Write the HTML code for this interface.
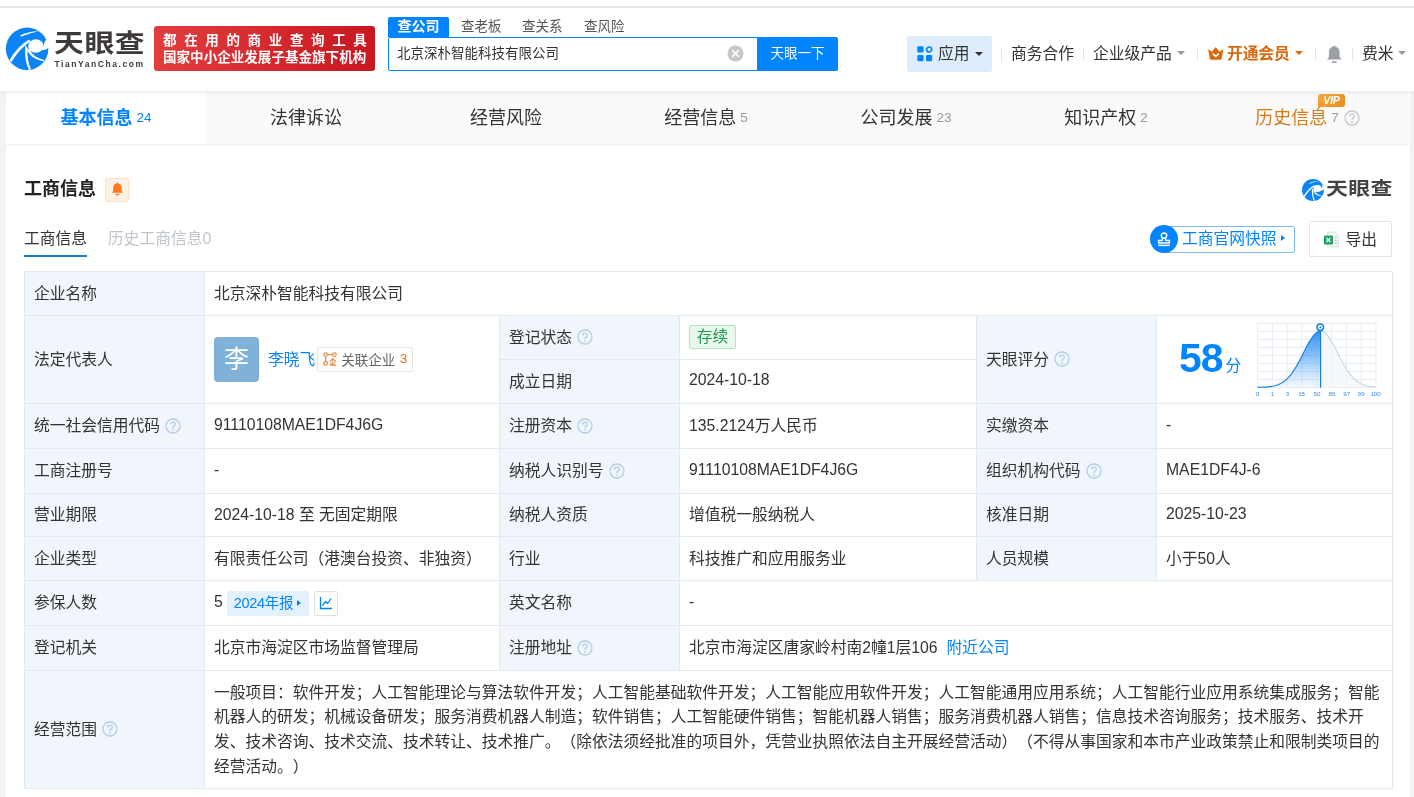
<!DOCTYPE html>
<html lang="zh-CN">
<head>
<meta charset="utf-8">
<title>北京深朴智能科技有限公司 - 天眼查</title>
<style>
*{box-sizing:border-box;margin:0;padding:0}
html,body{width:1414px;height:797px;overflow:hidden}
body{background:#f3f3f3;font-family:"Liberation Sans","Noto Sans CJK SC",sans-serif;font-size:15.75px;color:#333;position:relative;text-spacing-trim:space-all}
.abs{position:absolute;white-space:nowrap}
#wrap{position:absolute;left:0;top:0;width:1414px;height:797px;will-change:transform;opacity:.999}
a{color:#0084ff;text-decoration:none}
/* header */
#hdr{position:absolute;left:0;top:0;width:1414px;height:91px;background:#fff;box-shadow:0 2px 6px rgba(0,0,0,.07);z-index:5}
#topline{position:absolute;left:0;top:6px;width:1414px;height:2px;background:#e4e4e4}

.stab{top:17px;font-size:13.5px;line-height:19px;color:#555}
.nav{top:43px;font-size:15.75px;line-height:22px;color:#333}
.car{top:50.5px;width:0;height:0;border:4px solid transparent;border-top-width:4px;border-bottom-width:0}
.sep{top:47px;width:1px;height:14px;background:#e6e6e6}
/* card */
#card{position:absolute;left:6px;top:91px;width:1404px;height:720px;background:#fff}
#tabs{position:absolute;left:0;top:0;width:1403px;height:54px;background:#fafafa;border-bottom:1px solid #f0f0f0}
.tab{position:absolute;top:0;height:53px;width:200px;text-align:center;line-height:54.5px;font-size:18px;color:#333;white-space:nowrap}
.tab .n{font-size:13.5px;color:#999;margin-left:4px;position:relative;top:-2px}
.tab.on{background:#fff;color:#0084ff;font-weight:bold}
.tab.on .n{color:#0084ff;font-weight:normal}
/* table */
.c{position:absolute;border-right:1px solid #e1eaf3;border-bottom:1px solid #e1eaf3;padding-left:9px;padding-bottom:3px;display:flex;align-items:center;white-space:nowrap;background:#fff;color:#333}
.l{background:#f0f6fc}
.q{display:inline-block;width:16px;height:16px;margin-left:5px;flex:none;position:relative;top:1px}

.ava{position:relative;top:1px;width:45px;height:45px;border-radius:4px;background:#7fb1d9;color:#fff;font-size:25px;line-height:45px;text-align:center;flex:none}
.rel{position:relative;top:1.5px;margin-left:2px;height:25px;border:1px solid #e6e6e6;border-radius:2px;padding:0 5px 0 5px;display:flex;align-items:center;font-size:13.5px;color:#666;padding-bottom:2px}
.ok{position:relative;top:0.8px;height:24px;line-height:21px;padding:0 6.7px;border:1px solid #b3e2c3;background:#e9f8ee;color:#1f9b4c;border-radius:2px;font-size:15.75px}
.score{font-size:41px;font-weight:bold;color:#0084ff;margin-left:13px;letter-spacing:-1px}
.fen{color:#0084ff;margin-left:3px;margin-top:12px}
.yr{position:relative;top:1.5px;margin-left:4px;height:25px;line-height:25px;background:#e3f1ff;color:#0084ff;border-radius:2px;padding:0 8px 0 7px;font-size:14.5px;display:flex;align-items:center;letter-spacing:-0.3px}
.yr i{display:block;width:0;height:0;border:3.5px solid transparent;border-left:4.5px solid #0084ff;border-right:0;margin-left:4px}
.ch{position:relative;top:1.5px;margin-left:5px;width:24px;height:25px;border:1px solid #e0e0e0;border-radius:2px;display:flex;align-items:center;justify-content:center}
.scope{white-space:normal;line-height:24.75px;width:1172px;letter-spacing:0;position:relative;top:2px}
</style>
</head>
<body>
<div id="wrap">
<div id="hdr">
  <div id="topline"></div>
  <svg class="abs" style="left:0;top:20px" width="60" height="60" viewBox="0 0 797 797">
    <circle cx="360" cy="383" r="282" fill="#0d84f5"/>
    <ellipse cx="476" cy="345" rx="102" ry="90" fill="#fff"/>
    <path d="M624,246 Q592,285 578,338 L560,402 Q612,400 650,366 L700,300 Z" fill="#fff"/>
    <path d="M126,534 Q225,352 388,258 L402,285 Q258,378 150,562 Z" fill="#fff"/>
    <path d="M262,210 Q380,146 520,150 Q385,172 284,220 Z" fill="#fff"/>
    <path d="M356,380 Q395,520 592,552 L584,530 Q440,496 396,395 Z" fill="#fff"/>
    <path d="M336,330 Q318,540 386,664 L412,656 Q352,530 368,380 Z" fill="#fff"/>
  </svg>
  <div class="abs" id="lgname" style="left:54px;top:22.5px;font-size:25.5px;font-weight:700;letter-spacing:0.5px;color:#3f3a3a;line-height:40px;transform-origin:0 50%;transform:scaleX(1.17)">天眼查</div>
  <div class="abs" id="lgurl" style="left:54.5px;top:57px;font-size:8.5px;font-weight:bold;letter-spacing:1.55px;color:#3f3a3a;line-height:14px">TianYanCha.com</div>
  <div class="abs" id="banner" style="left:154px;top:26px;width:221px;height:45px;border-radius:3px;background:linear-gradient(90deg,#e23d3f,#c9171f);color:#fff;font-weight:bold;text-align:center">
    <div class="abs" style="left:9px;top:6px;font-size:13.5px;line-height:18px;letter-spacing:7.65px">都在用的商业查询工具</div>
    <div class="abs" style="left:9px;top:23px;font-size:13.5px;line-height:18px;letter-spacing:0.05px">国家中小企业发展子基金旗下机构</div>
  </div>
  <div class="abs" style="left:388px;top:17px;width:61px;height:20px;background:#0084ff;color:#fff;font-weight:bold;font-size:14px;line-height:19px;text-align:center;border-radius:2px 2px 0 0">查公司</div>
  <div class="abs stab" style="left:461px">查老板</div>
  <div class="abs stab" style="left:522px">查关系</div>
  <div class="abs stab" style="left:584px">查风险</div>
  <div class="abs" style="left:388px;top:37px;width:370px;height:34px;border:1px solid #0084ff;border-radius:2px 0 0 2px;background:#fff"></div>
  <div class="abs" style="left:397px;top:44px;font-size:13.5px;line-height:20px;color:#333">北京深朴智能科技有限公司</div>
  <svg class="abs" style="left:727px;top:45px" width="17" height="17" viewBox="0 0 17 17"><circle cx="8.5" cy="8.5" r="8" fill="#c6c6cc"/><path d="M5.6,5.6 L11.4,11.4 M11.4,5.6 L5.6,11.4" stroke="#fff" stroke-width="1.6" stroke-linecap="round"/></svg>
  <div class="abs" style="left:757px;top:37px;width:81px;height:34px;background:#0084ff;color:#fff;font-size:13.5px;line-height:33px;text-align:center;border-radius:0 2px 2px 0">天眼一下</div>

  <div class="abs" style="left:907px;top:36px;width:85px;height:36px;background:#deedfd;border-radius:3px"></div>
  <svg class="abs" style="left:917px;top:46px" width="16" height="16" viewBox="0 0 16 16"><rect x="0.3" y="0.3" width="6.2" height="6.2" rx="1.3" fill="#0084ff"/><rect x="0.3" y="9" width="6.2" height="6.2" rx="1.3" fill="#0084ff"/><rect x="9" y="9" width="6.2" height="6.2" rx="1.3" fill="#0084ff"/><circle cx="12.1" cy="3.5" r="2.5" fill="none" stroke="#0084ff" stroke-width="1.7"/></svg>
  <div class="abs nav" style="left:938px">应用</div>
  <div class="abs car" style="left:975px;top:52px;border-top-color:#333"></div>
  <div class="abs sep" style="left:1001px"></div>
  <div class="abs nav" style="left:1011px">商务合作</div>
  <div class="abs sep" style="left:1083px"></div>
  <div class="abs nav" style="left:1093px">企业级产品</div>
  <div class="abs car" style="left:1177px;border-top-color:#999"></div>
  <div class="abs sep" style="left:1197px"></div>
  <svg class="abs" style="left:1206.5px;top:45.8px" width="17.5" height="15" viewBox="0 0 16 15" preserveAspectRatio="none"><path d="M1,3.2 L4.6,5.8 L8,1 L11.4,5.8 L15,3.2 L13.4,12.6 Q13.2,13.8 12,13.8 L4,13.8 Q2.8,13.8 2.6,12.6 Z" fill="#d9670c"/><path d="M5.6,8 L8,10.4 L10.4,8" stroke="#fff" stroke-width="1.5" fill="none" stroke-linecap="round" stroke-linejoin="round"/></svg>
  <div class="abs nav" style="left:1227px;color:#d9670c;font-weight:bold;letter-spacing:-0.1px">开通会员</div>
  <div class="abs car" style="left:1295px;border-top-color:#d9670c"></div>
  <div class="abs sep" style="left:1315px"></div>
  <svg class="abs" style="left:1325.3px;top:44px" width="18.5" height="21" viewBox="0 0 18 21" preserveAspectRatio="none"><path d="M9,1.5 Q9.9,1.5 9.9,2.6 Q14.2,3.6 14.2,8.4 L14.2,13 L16,15.4 L2,15.4 L3.8,13 L3.8,8.4 Q3.8,3.6 8.1,2.6 Q8.1,1.5 9,1.5 Z" fill="#9b9ea4"/><rect x="6.5" y="17.3" width="5" height="1.6" rx="0.8" fill="#9b9ea4"/></svg>
  <div class="abs sep" style="left:1352px"></div>
  <div class="abs nav" style="left:1362px">费米</div>
  <div class="abs car" style="left:1398px;border-top-color:#999"></div>
</div>
<div id="card">
  <div id="tabs">
    <div class="tab on" style="left:0">基本信息<span class="n">24</span></div>
    <div class="tab" style="left:200px">法律诉讼</div>
    <div class="tab" style="left:400px">经营风险</div>
    <div class="tab" style="left:600px">经营信息<span class="n">5</span></div>
    <div class="tab" style="left:800px">公司发展<span class="n">23</span></div>
    <div class="tab" style="left:1000px">知识产权<span class="n">2</span></div>
    <div class="tab" style="left:1200px;color:#d67b19;padding-left:3px">历史信息<span class="n">7</span><svg style="display:inline-block;vertical-align:middle;margin-left:5px;position:relative;top:-1px" width="16" height="16" viewBox="0 0 16 16"><circle cx="8" cy="8" r="7" fill="none" stroke="#c4c9d0" stroke-width="1.3"/><path d="M5.7,6.5 Q5.7,4.2 8,4.2 Q10.3,4.2 10.3,6.2 Q10.3,7.4 9,8.1 Q8,8.7 8,9.9" fill="none" stroke="#c4c9d0" stroke-width="1.3"/><circle cx="8" cy="11.9" r="0.85" fill="#c4c9d0"/></svg>
      <div class="abs" style="left:112px;top:3px;width:27px;height:13px;border-radius:3px;background:linear-gradient(135deg,#f6ad3c,#e88a1e);color:#fff;font-size:10.5px;font-weight:bold;font-style:italic;line-height:13px;text-align:center;letter-spacing:-0.2px">VIP</div>
      <div class="abs" style="left:112px;top:12px;width:0;height:0;border-top:7px solid #ee9a2c;border-right:6px solid transparent"></div>
    </div>
  </div>
</div>
<div id="mid">
  <div class="abs" id="ttl" style="left:24px;top:176px;font-size:18px;font-weight:bold;line-height:26px;color:#222">工商信息</div>
  <div class="abs" style="left:105px;top:178px;width:24px;height:24px;background:#fff2e4;border:1px solid #ffe2c4;border-radius:2px"></div>
  <svg class="abs" style="left:110.6px;top:181.6px" width="12.8" height="14.5" viewBox="0 0 12 14" preserveAspectRatio="none"><path d="M6,0.6 Q6.7,0.6 6.8,1.4 Q10,2.2 10,5.6 L10,8.6 L11.2,10.4 L0.8,10.4 L2,8.6 L2,5.6 Q2,2.2 5.2,1.4 Q5.3,0.6 6,0.6 Z" fill="#ff7a1a"/><rect x="4.2" y="11.4" width="3.6" height="1.5" rx="0.7" fill="#ff7a1a"/></svg>
  <div class="abs" id="st1" style="left:24px;top:227.5px;font-size:15.75px;line-height:22px;color:#333">工商信息</div>
  <div class="abs" style="left:24px;top:255px;width:63px;height:2px;background:#1b7fd6"></div>
  <div class="abs" id="st2" style="left:108px;top:227.5px;font-size:15.75px;line-height:22px;color:#c0c4cc">历史工商信息0</div>

  <svg class="abs" style="left:1301.5px;top:178.5px" width="22" height="22" viewBox="78 100 566 566">
    <circle cx="360" cy="383" r="282" fill="#0d84f5"/>
    <ellipse cx="476" cy="345" rx="102" ry="90" fill="#fff"/>
    <path d="M624,246 Q592,285 578,338 L560,402 Q612,400 650,366 L700,300 Z" fill="#fff"/>
    <path d="M126,534 Q225,352 388,258 L402,285 Q258,378 150,562 Z" fill="#fff"/>
    <path d="M262,210 Q380,146 520,150 Q385,172 284,220 Z" fill="#fff"/>
    <path d="M356,380 Q395,520 592,552 L584,530 Q440,496 396,395 Z" fill="#fff"/>
    <path d="M336,330 Q318,540 386,664 L412,656 Q352,530 368,380 Z" fill="#fff"/>
  </svg>
  <div class="abs" id="lg2" style="left:1326px;top:174px;font-size:18.7px;font-weight:700;line-height:30px;color:#444;letter-spacing:0.3px;transform-origin:0 50%;transform:scaleX(1.17)">天眼查</div>

  <div class="abs" style="left:1164px;top:226px;width:131px;height:27px;border:1px solid #7db9f5;border-radius:2px;background:#fff"></div>
  <div class="abs" style="left:1150px;top:225px;width:28px;height:28px;border-radius:14px;background:#0084ff"></div>
  <svg class="abs" style="left:1156px;top:231px" width="16" height="16" viewBox="0 0 16 16"><g fill="none" stroke="#fff" stroke-width="1.5"><circle cx="8" cy="4.6" r="2.7"/><path d="M6.6,7 L6.2,9.6 H2.6 V12 H13.4 V9.6 H9.8 L9.4,7"/><path d="M2.4,14.4 H13.6"/></g></svg>
  <div class="abs" id="snap" style="left:1182px;top:228px;font-size:15.75px;line-height:22px;color:#0084ff">工商官网快照</div>
  <div class="abs" style="left:1281px;top:235px;width:0;height:0;border:3.5px solid transparent;border-left:4.5px solid #0084ff;border-right:0"></div>

  <div class="abs" style="left:1309px;top:221px;width:83px;height:36px;border:1px solid #e4e4e4;border-radius:2px;background:#fff"></div>
  <svg class="abs" style="left:1322.5px;top:230.5px" width="17" height="17" viewBox="0 0 17 17"><path d="M4.5,1 H12 L15.5,4.5 V16 H4.5 Z" fill="#f4f4f4" stroke="#d9d9d9" stroke-width="0.8"/><rect x="1" y="4.5" width="9" height="9" rx="1" fill="#21a366"/><path d="M3.6,6.8 L7.4,11.2 M7.4,6.8 L3.6,11.2" stroke="#fff" stroke-width="1.3"/><path d="M11.5,7 h2.5 M11.5,9.5 h2.5 M11.5,12 h2.5" stroke="#c8c8c8" stroke-width="1"/></svg>
  <div class="abs" id="exp" style="left:1345.5px;top:229px;font-size:15.75px;line-height:22px;color:#333">导出</div>
</div>
<div id="tbl">
<div class="abs" style="left:24px;top:271px;width:1369px;height:518px;border-left:1px solid #e1eaf3;border-top:1px solid #e1eaf3"></div>
<div class="c l" style="left:25px;top:272px;width:180px;height:44px;"><span>企业名称</span></div>
<div class="c" style="left:205px;top:272px;width:1188px;height:44px;"><span>北京深朴智能科技有限公司</span></div>
<div class="c l" style="left:25px;top:316px;width:180px;height:88px;"><span>法定代表人</span></div>
<div class="c" style="left:205px;top:316px;width:295px;height:88px;"><span class="ava">李</span><a style="margin-left:9px">李晓飞</a><span class="rel"><svg width="14" height="14" viewBox="0 0 14 14" style="flex:none"><g fill="none" stroke="#e8873a" stroke-width="1.2"><circle cx="2.6" cy="2.6" r="1.8"/><circle cx="2.6" cy="11.4" r="1.8"/><circle cx="11.4" cy="2.6" r="1.8"/><path d="M2.6,4.4 V9.6 M4.4,2.6 H9.6"/><path d="M6.6,9.6 L9.8,6.8 L13,9.6 M9.8,8.6 V13 M7,13.2 H12.8 M8,10.8 v2 M11.4,10.8 h1"/></g></svg><span style="margin-left:4px">关联企业</span><span style="color:#e0701a;margin-left:4.5px">3</span></span></div>
<div class="c l" style="left:500px;top:316px;width:180px;height:44px;"><span>登记状态</span><svg class="q" viewBox="0 0 16 16"><circle cx="8" cy="8" r="7" fill="none" stroke="#b3cde6" stroke-width="1.3"/><path d="M5.7,6.5 Q5.7,4.2 8,4.2 Q10.3,4.2 10.3,6.2 Q10.3,7.4 9,8.1 Q8,8.7 8,9.9" fill="none" stroke="#b3cde6" stroke-width="1.3"/><circle cx="8" cy="11.9" r="0.85" fill="#b3cde6"/></svg></div>
<div class="c" style="left:680px;top:316px;width:297px;height:44px;"><span class="ok">存续</span></div>
<div class="c l" style="left:500px;top:360px;width:180px;height:44px;"><span>成立日期</span></div>
<div class="c" style="left:680px;top:360px;width:297px;height:44px;"><span>2024-10-18</span></div>
<div class="c l" style="left:977px;top:316px;width:180px;height:88px;"><span>天眼评分</span><svg class="q" viewBox="0 0 16 16"><circle cx="8" cy="8" r="7" fill="none" stroke="#b3cde6" stroke-width="1.3"/><path d="M5.7,6.5 Q5.7,4.2 8,4.2 Q10.3,4.2 10.3,6.2 Q10.3,7.4 9,8.1 Q8,8.7 8,9.9" fill="none" stroke="#b3cde6" stroke-width="1.3"/><circle cx="8" cy="11.9" r="0.85" fill="#b3cde6"/></svg></div>
<div class="c" style="left:1157px;top:316px;width:236px;height:88px;"><span class="score">58</span><span class="fen">分</span></div>
<div class="c l" style="left:25px;top:404px;width:180px;height:45px;"><span>统一社会信用代码</span><svg class="q" viewBox="0 0 16 16"><circle cx="8" cy="8" r="7" fill="none" stroke="#b3cde6" stroke-width="1.3"/><path d="M5.7,6.5 Q5.7,4.2 8,4.2 Q10.3,4.2 10.3,6.2 Q10.3,7.4 9,8.1 Q8,8.7 8,9.9" fill="none" stroke="#b3cde6" stroke-width="1.3"/><circle cx="8" cy="11.9" r="0.85" fill="#b3cde6"/></svg></div>
<div class="c" style="left:205px;top:404px;width:295px;height:45px;"><span>91110108MAE1DF4J6G</span></div>
<div class="c l" style="left:500px;top:404px;width:180px;height:45px;"><span>注册资本</span><svg class="q" viewBox="0 0 16 16"><circle cx="8" cy="8" r="7" fill="none" stroke="#b3cde6" stroke-width="1.3"/><path d="M5.7,6.5 Q5.7,4.2 8,4.2 Q10.3,4.2 10.3,6.2 Q10.3,7.4 9,8.1 Q8,8.7 8,9.9" fill="none" stroke="#b3cde6" stroke-width="1.3"/><circle cx="8" cy="11.9" r="0.85" fill="#b3cde6"/></svg></div>
<div class="c" style="left:680px;top:404px;width:297px;height:45px;"><span>135.2124万人民币</span></div>
<div class="c l" style="left:977px;top:404px;width:180px;height:45px;"><span>实缴资本</span></div>
<div class="c" style="left:1157px;top:404px;width:236px;height:45px;"><span>-</span></div>
<div class="c l" style="left:25px;top:449px;width:180px;height:45px;"><span>工商注册号</span></div>
<div class="c" style="left:205px;top:449px;width:295px;height:45px;"><span>-</span></div>
<div class="c l" style="left:500px;top:449px;width:180px;height:45px;"><span>纳税人识别号</span><svg class="q" viewBox="0 0 16 16"><circle cx="8" cy="8" r="7" fill="none" stroke="#b3cde6" stroke-width="1.3"/><path d="M5.7,6.5 Q5.7,4.2 8,4.2 Q10.3,4.2 10.3,6.2 Q10.3,7.4 9,8.1 Q8,8.7 8,9.9" fill="none" stroke="#b3cde6" stroke-width="1.3"/><circle cx="8" cy="11.9" r="0.85" fill="#b3cde6"/></svg></div>
<div class="c" style="left:680px;top:449px;width:297px;height:45px;"><span>91110108MAE1DF4J6G</span></div>
<div class="c l" style="left:977px;top:449px;width:180px;height:45px;"><span>组织机构代码</span><svg class="q" viewBox="0 0 16 16"><circle cx="8" cy="8" r="7" fill="none" stroke="#b3cde6" stroke-width="1.3"/><path d="M5.7,6.5 Q5.7,4.2 8,4.2 Q10.3,4.2 10.3,6.2 Q10.3,7.4 9,8.1 Q8,8.7 8,9.9" fill="none" stroke="#b3cde6" stroke-width="1.3"/><circle cx="8" cy="11.9" r="0.85" fill="#b3cde6"/></svg></div>
<div class="c" style="left:1157px;top:449px;width:236px;height:45px;"><span>MAE1DF4J-6</span></div>
<div class="c l" style="left:25px;top:494px;width:180px;height:43px;"><span>营业期限</span></div>
<div class="c" style="left:205px;top:494px;width:295px;height:43px;"><span>2024-10-18 至 无固定期限</span></div>
<div class="c l" style="left:500px;top:494px;width:180px;height:43px;"><span>纳税人资质</span></div>
<div class="c" style="left:680px;top:494px;width:297px;height:43px;"><span>增值税一般纳税人</span></div>
<div class="c l" style="left:977px;top:494px;width:180px;height:43px;"><span>核准日期</span></div>
<div class="c" style="left:1157px;top:494px;width:236px;height:43px;"><span>2025-10-23</span></div>
<div class="c l" style="left:25px;top:537px;width:180px;height:44px;"><span>企业类型</span></div>
<div class="c" style="left:205px;top:537px;width:295px;height:44px;"><span>有限责任公司（港澳台投资、非独资）</span></div>
<div class="c l" style="left:500px;top:537px;width:180px;height:44px;"><span>行业</span></div>
<div class="c" style="left:680px;top:537px;width:297px;height:44px;"><span>科技推广和应用服务业</span></div>
<div class="c l" style="left:977px;top:537px;width:180px;height:44px;"><span>人员规模</span></div>
<div class="c" style="left:1157px;top:537px;width:236px;height:44px;"><span>小于50人</span></div>
<div class="c l" style="left:25px;top:581px;width:180px;height:45px;"><span>参保人数</span></div>
<div class="c" style="left:205px;top:581px;width:295px;height:45px;"><span>5</span><span class="yr">2024年报<i></i></span><span class="ch"><svg width="14" height="14" viewBox="0 0 14 14"><path d="M1.5,1 V12.5 H13" fill="none" stroke="#0084ff" stroke-width="1.3"/><path d="M3.5,9.5 L6.5,5.5 L8.5,7.5 L12,2.5" fill="none" stroke="#0084ff" stroke-width="1.3"/></svg></span></div>
<div class="c l" style="left:500px;top:581px;width:180px;height:45px;"><span>英文名称</span></div>
<div class="c" style="left:680px;top:581px;width:713px;height:45px;"><span>-</span></div>
<div class="c l" style="left:25px;top:626px;width:180px;height:45px;"><span>登记机关</span></div>
<div class="c" style="left:205px;top:626px;width:295px;height:45px;"><span>北京市海淀区市场监督管理局</span></div>
<div class="c l" style="left:500px;top:626px;width:180px;height:45px;"><span>注册地址</span><svg class="q" viewBox="0 0 16 16"><circle cx="8" cy="8" r="7" fill="none" stroke="#b3cde6" stroke-width="1.3"/><path d="M5.7,6.5 Q5.7,4.2 8,4.2 Q10.3,4.2 10.3,6.2 Q10.3,7.4 9,8.1 Q8,8.7 8,9.9" fill="none" stroke="#b3cde6" stroke-width="1.3"/><circle cx="8" cy="11.9" r="0.85" fill="#b3cde6"/></svg></div>
<div class="c" style="left:680px;top:626px;width:713px;height:45px;"><span>北京市海淀区唐家岭村南2幢1层106</span><a style="margin-left:9px">附近公司</a></div>
<div class="c l" style="left:25px;top:671px;width:180px;height:118px;"><span>经营范围</span><svg class="q" viewBox="0 0 16 16"><circle cx="8" cy="8" r="7" fill="none" stroke="#b3cde6" stroke-width="1.3"/><path d="M5.7,6.5 Q5.7,4.2 8,4.2 Q10.3,4.2 10.3,6.2 Q10.3,7.4 9,8.1 Q8,8.7 8,9.9" fill="none" stroke="#b3cde6" stroke-width="1.3"/><circle cx="8" cy="11.9" r="0.85" fill="#b3cde6"/></svg></div>
<div class="c" style="left:205px;top:671px;width:1188px;height:118px;"><div class="scope">一般项目：软件开发；人工智能理论与算法软件开发；人工智能基础软件开发；人工智能应用软件开发；人工智能通用应用系统；人工智能行业应用系统集成服务；智能机器人的研发；机械设备研发；服务消费机器人制造；软件销售；人工智能硬件销售；智能机器人销售；服务消费机器人销售；信息技术咨询服务；技术服务、技术开发、技术咨询、技术交流、技术转让、技术推广。（除依法须经批准的项目外，凭营业执照依法自主开展经营活动）（不得从事国家和本市产业政策禁止和限制类项目的经营活动。）</div></div>
<svg class="abs" style="left:1250px;top:316px" width="140" height="86" viewBox="1250 316 140 86">
  <defs><linearGradient id="gf" x1="0" y1="0" x2="0" y2="1"><stop offset="0" stop-color="#1a86f5" stop-opacity="0.9"/><stop offset="0.45" stop-color="#3b98f7" stop-opacity="0.6"/><stop offset="1" stop-color="#8cc3fb" stop-opacity="0.12"/></linearGradient></defs>
  <path d="M1257.50,323.30V387.60M1257.50,323.30H1376.00M1272.31,323.30V387.60M1257.50,331.34H1376.00M1287.12,323.30V387.60M1257.50,339.38H1376.00M1301.94,323.30V387.60M1257.50,347.41H1376.00M1316.75,323.30V387.60M1257.50,355.45H1376.00M1331.56,323.30V387.60M1257.50,363.49H1376.00M1346.38,323.30V387.60M1257.50,371.53H1376.00M1361.19,323.30V387.60M1257.50,379.56H1376.00M1376.00,323.30V387.60M1257.50,387.60H1376.00" stroke="#e6edf6" stroke-width="1" fill="none"/>
  <path d="M1320.6,387.4 L1320.60,331.20 L1321.60,331.29 L1322.60,331.57 L1323.60,332.04 L1324.60,332.68 L1325.60,333.50 L1326.60,334.48 L1327.60,335.62 L1328.60,336.90 L1329.60,338.31 L1330.60,339.85 L1331.60,341.49 L1332.60,343.22 L1333.60,345.02 L1334.60,346.89 L1335.60,348.81 L1336.60,350.76 L1337.60,352.72 L1338.60,354.69 L1339.60,356.65 L1340.60,358.59 L1341.60,360.50 L1342.60,362.36 L1343.60,364.18 L1344.60,365.93 L1345.60,367.62 L1346.60,369.23 L1347.60,370.77 L1348.60,372.23 L1349.60,373.61 L1350.60,374.90 L1351.60,376.12 L1352.60,377.24 L1353.60,378.29 L1354.60,379.25 L1355.60,380.14 L1356.60,380.95 L1357.60,381.69 L1358.60,382.36 L1359.60,382.97 L1360.60,383.52 L1361.60,384.01 L1362.60,384.45 L1363.60,384.84 L1364.60,385.19 L1365.60,385.49 L1366.60,385.76 L1367.60,386.00 L1368.60,386.20 L1369.60,386.38 L1370.60,386.54 L1371.60,386.67 L1372.60,386.79 L1373.60,386.89 L1374.60,386.97 L1375.60,387.04 L1376.00,387.07 Z" fill="#f3f5f8" fill-opacity="0.7" stroke="none"/>
  <path d="M1320.6,331.20 L1320.60,331.20 L1321.60,331.29 L1322.60,331.57 L1323.60,332.04 L1324.60,332.68 L1325.60,333.50 L1326.60,334.48 L1327.60,335.62 L1328.60,336.90 L1329.60,338.31 L1330.60,339.85 L1331.60,341.49 L1332.60,343.22 L1333.60,345.02 L1334.60,346.89 L1335.60,348.81 L1336.60,350.76 L1337.60,352.72 L1338.60,354.69 L1339.60,356.65 L1340.60,358.59 L1341.60,360.50 L1342.60,362.36 L1343.60,364.18 L1344.60,365.93 L1345.60,367.62 L1346.60,369.23 L1347.60,370.77 L1348.60,372.23 L1349.60,373.61 L1350.60,374.90 L1351.60,376.12 L1352.60,377.24 L1353.60,378.29 L1354.60,379.25 L1355.60,380.14 L1356.60,380.95 L1357.60,381.69 L1358.60,382.36 L1359.60,382.97 L1360.60,383.52 L1361.60,384.01 L1362.60,384.45 L1363.60,384.84 L1364.60,385.19 L1365.60,385.49 L1366.60,385.76 L1367.60,386.00 L1368.60,386.20 L1369.60,386.38 L1370.60,386.54 L1371.60,386.67 L1372.60,386.79 L1373.60,386.89 L1374.60,386.97 L1375.60,387.04 L1376.00,387.07" fill="none" stroke="#c9d5e3" stroke-width="1.1"/>
  <path d="M1257.5,387.4 L1257.50,387.33 L1258.50,387.31 L1259.50,387.29 L1260.50,387.27 L1261.50,387.24 L1262.50,387.20 L1263.50,387.16 L1264.50,387.11 L1265.50,387.05 L1266.50,386.98 L1267.50,386.89 L1268.50,386.80 L1269.50,386.68 L1270.50,386.55 L1271.50,386.40 L1272.50,386.22 L1273.50,386.02 L1274.50,385.79 L1275.50,385.52 L1276.50,385.22 L1277.50,384.88 L1278.50,384.49 L1279.50,384.06 L1280.50,383.57 L1281.50,383.03 L1282.50,382.43 L1283.50,381.76 L1284.50,381.03 L1285.50,380.22 L1286.50,379.34 L1287.50,378.39 L1288.50,377.35 L1289.50,376.23 L1290.50,375.03 L1291.50,373.74 L1292.50,372.37 L1293.50,370.92 L1294.50,369.39 L1295.50,367.78 L1296.50,366.10 L1297.50,364.35 L1298.50,362.55 L1299.50,360.69 L1300.50,358.78 L1301.50,356.85 L1302.50,354.89 L1303.50,352.92 L1304.50,350.95 L1305.50,349.00 L1306.50,347.08 L1307.50,345.21 L1308.50,343.39 L1309.50,341.66 L1310.50,340.01 L1311.50,338.46 L1312.50,337.03 L1313.50,335.74 L1314.50,334.59 L1315.50,333.59 L1316.50,332.76 L1317.50,332.10 L1318.50,331.61 L1319.50,331.31 L1320.50,331.20 L1320.60,331.20 L1320.6,387.4 Z" fill="url(#gf)"/>
  <path d="M1257.5,387.33 L1257.50,387.33 L1258.50,387.31 L1259.50,387.29 L1260.50,387.27 L1261.50,387.24 L1262.50,387.20 L1263.50,387.16 L1264.50,387.11 L1265.50,387.05 L1266.50,386.98 L1267.50,386.89 L1268.50,386.80 L1269.50,386.68 L1270.50,386.55 L1271.50,386.40 L1272.50,386.22 L1273.50,386.02 L1274.50,385.79 L1275.50,385.52 L1276.50,385.22 L1277.50,384.88 L1278.50,384.49 L1279.50,384.06 L1280.50,383.57 L1281.50,383.03 L1282.50,382.43 L1283.50,381.76 L1284.50,381.03 L1285.50,380.22 L1286.50,379.34 L1287.50,378.39 L1288.50,377.35 L1289.50,376.23 L1290.50,375.03 L1291.50,373.74 L1292.50,372.37 L1293.50,370.92 L1294.50,369.39 L1295.50,367.78 L1296.50,366.10 L1297.50,364.35 L1298.50,362.55 L1299.50,360.69 L1300.50,358.78 L1301.50,356.85 L1302.50,354.89 L1303.50,352.92 L1304.50,350.95 L1305.50,349.00 L1306.50,347.08 L1307.50,345.21 L1308.50,343.39 L1309.50,341.66 L1310.50,340.01 L1311.50,338.46 L1312.50,337.03 L1313.50,335.74 L1314.50,334.59 L1315.50,333.59 L1316.50,332.76 L1317.50,332.10 L1318.50,331.61 L1319.50,331.31 L1320.50,331.20 L1320.60,331.20" fill="none" stroke="#1c7fe0" stroke-width="1.2"/>
  <path d="M1320.6,330.2 V387.79999999999995" stroke="#1c7fe0" stroke-width="1.2"/>
  <path d="M1318.0,329.0 L1320.6,332.6 L1323.1999999999998,329.0 Z" fill="#1c7fe0"/>
  <circle cx="1320.3" cy="327.2" r="3.2" fill="#fff" stroke="#1c7fe0" stroke-width="1.5"/>
  <circle cx="1320.3" cy="327.2" r="1" fill="#1c7fe0"/>
  <g font-size="6.2" fill="#3a8be0" font-family="Liberation Sans, sans-serif"><text x="1257.5" y="396.2" text-anchor="middle">0</text><text x="1272.5" y="396.2" text-anchor="middle">1</text><text x="1287.6" y="396.2" text-anchor="middle">3</text><text x="1301.6" y="396.2" text-anchor="middle">15</text><text x="1317.0" y="396.2" text-anchor="middle">50</text><text x="1332.0" y="396.2" text-anchor="middle">85</text><text x="1346.8" y="396.2" text-anchor="middle">97</text><text x="1361.3" y="396.2" text-anchor="middle">99</text><text x="1375.6" y="396.2" text-anchor="middle">100</text></g>
</svg>
</div>
</div>
</body>
</html>
